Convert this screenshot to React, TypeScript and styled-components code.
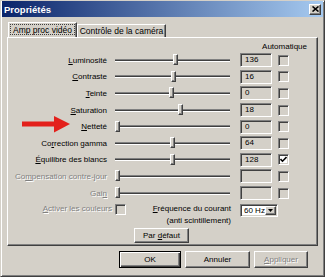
import React from "react";
import styled, { createGlobalStyle, css } from "styled-components";

const GlobalStyle = createGlobalStyle`
  html, body {
    margin: 0;
    padding: 0;
    background: #d4d0c8;
  }
  body {
    font-family: "Liberation Sans", Arial, sans-serif;
    font-size: 8px;
    color: #000;
  }
`;

const raised = css`
  border: 1px solid;
  border-color: #fff #404040 #404040 #fff;
  box-shadow: inset -1px -1px 0 #808080;
`;

const sunken = css`
  border: 1px solid;
  border-color: #808080 #fff #fff #808080;
  box-shadow: inset 1px 1px 0 #404040, inset -1px -1px 0 #d4d0c8;
`;

const disabledText = css`
  color: #808080;
  text-shadow: 1px 1px 0 #fff;
`;

const Window = styled.div`
  box-sizing: border-box;
  width: 325px;
  height: 277px;
  background: #d4d0c8;
  border: 1px solid;
  border-color: #d4d0c8 #404040 #404040 #d4d0c8;
  box-shadow: inset 1px 1px 0 #fff, inset -1px -1px 0 #808080;
  display: flex;
  flex-direction: column;
`;

const TitleBar = styled.div`
  height: 16px;
  margin: 0 1px;
  padding: 0 2px 0 2px;
  display: flex;
  align-items: center;
  justify-content: space-between;
  background: linear-gradient(to right, #0a246a, #a6caf0);
`;

const Title = styled.span`
  color: #fff;
  font-weight: bold;
  font-size: 9.5px;
`;

const CloseButton = styled.div`
  box-sizing: border-box;
  width: 12px;
  height: 11px;
  background: #d4d0c8;
  ${raised};
  display: flex;
  align-items: center;
  justify-content: center;
`;

const Body = styled.div`
  padding: 5px 0 0 6px;
  display: flex;
  flex-direction: column;
`;

const TabRow = styled.div`
  height: 15px;
  padding-left: 1px;
  display: flex;
  align-items: flex-end;
`;

const Tab = styled.div<{ $active?: boolean; $width: number }>`
  box-sizing: border-box;
  width: ${(p) => p.$width}px;
  height: ${(p) => (p.$active ? 15 : 13)}px;
  border-top: 1px solid #fff;
  border-left: 1px solid #fff;
  border-right: 1px solid #404040;
  box-shadow: inset -1px 0 0 #808080;
  display: flex;
  align-items: center;
  justify-content: center;
  white-space: nowrap;
  font-size: 8.5px;
  ${(p) =>
    p.$active &&
    css`
      outline: 1px dotted #404040;
      outline-offset: -3px;
    `}
`;

const Panel = styled.div`
  position: relative;
  box-sizing: border-box;
  width: 311px;
  height: 209px;
  padding-top: 4px;
  ${raised};
  display: flex;
  flex-direction: column;
`;

const AutoHeader = styled.div`
  height: 10px;
  line-height: 10px;
  text-align: right;
  padding-right: 10px;
`;

const Row = styled.div`
  height: 16.6px;
  display: flex;
  align-items: center;
`;

const Label = styled.span<{ $disabled?: boolean; $width?: number }>`
  width: ${(p) => p.$width ?? 99}px;
  text-align: right;
  white-space: nowrap;
  flex-shrink: 0;
  ${(p) => p.$disabled && disabledText};
`;

const Key = styled.span`
  text-decoration: underline;
`;

const Slider = styled.div`
  position: relative;
  width: 120px;
  height: 100%;
  margin: 0 7px 0 6px;
  padding: 0 3px 0 2px;
  box-sizing: border-box;
  display: flex;
  align-items: center;
`;

const Track = styled.div`
  flex: 1;
  height: 1px;
  background: #404040;
  border-top: 1px solid #808080;
  border-bottom: 1px solid #fff;
`;

const Thumb = styled.div`
  position: absolute;
  top: 50%;
  margin-top: -6px;
  box-sizing: border-box;
  width: 5px;
  height: 11px;
  background: #d4d0c8;
  ${raised};
`;

const Edit = styled.div`
  box-sizing: border-box;
  width: 32px;
  height: 14px;
  padding-left: 4px;
  line-height: 12px;
  background: #d4d0c8;
  ${sunken};
`;

const Check = styled.div<{ $checked?: boolean }>`
  box-sizing: border-box;
  width: 11px;
  height: 11px;
  flex-shrink: 0;
  margin-left: 6px;
  background: ${(p) => (p.$checked ? "#fff" : "#d4d0c8")};
  ${sunken};
  display: flex;
  align-items: center;
  justify-content: center;
`;

const FreqRow = styled.div`
  height: 26px;
  display: flex;
  align-items: flex-start;
  padding-top: 2px;
  box-sizing: border-box;
`;

const FreqLabel = styled.div`
  width: 105px;
  margin: 0 9px 0 0;
  text-align: right;
  line-height: 11.5px;
  white-space: nowrap;
`;

const Select = styled.div`
  box-sizing: border-box;
  width: 38px;
  height: 13px;
  margin-top: 1px;
  background: #fff;
  ${sunken};
  display: flex;
  align-items: center;
  justify-content: space-between;
  padding: 0 1px 0 3px;
  line-height: 10px;
`;

const DropButton = styled.div`
  box-sizing: border-box;
  width: 11px;
  height: 9px;
  background: #d4d0c8;
  ${raised};
  display: flex;
  align-items: center;
  justify-content: center;
`;

const Button = styled.div<{ $width: number; $height?: number; $default?: boolean; $disabled?: boolean }>`
  box-sizing: border-box;
  width: ${(p) => p.$width}px;
  height: ${(p) => p.$height ?? 17}px;
  background: #d4d0c8;
  display: flex;
  align-items: center;
  justify-content: center;
  white-space: nowrap;
  ${raised};
  ${(p) =>
    p.$default &&
    css`
      border-color: #000;
      box-shadow: inset 1px 1px 0 #fff, inset -1px -1px 0 #404040,
        inset -2px -2px 0 #808080;
    `}
  ${(p) => p.$disabled && disabledText};
`;

const CenterRow = styled.div`
  display: flex;
  justify-content: center;
  margin-top: 1px;
  padding-right: 2px;
`;

const ButtonBar = styled.div`
  display: flex;
  justify-content: flex-end;
  gap: 4px;
  margin-top: 5px;
  padding-right: 16px;
`;

const Arrow = styled.svg`
  position: absolute;
  left: 14px;
  top: 78px;
`;

const withKey = (text: string, idx: number) => (
  <span>
    {text.slice(0, idx)}
    <Key>{text[idx]}</Key>
    {text.slice(idx + 1)}
  </span>
);

type SliderRow = {
  label: string;
  key: number;
  pos: number;
  value: string;
  checked?: boolean;
  disabled?: boolean;
};

const rows: SliderRow[] = [
  { label: "Luminosité", key: 0, pos: 62, value: "136" },
  { label: "Contraste", key: 0, pos: 60, value: "16" },
  { label: "Teinte", key: 0, pos: 58, value: "0" },
  { label: "Saturation", key: 0, pos: 67, value: "18" },
  { label: "Netteté", key: 0, pos: 4, value: "0" },
  { label: "Correction gamma", key: 2, pos: 59, value: "64" },
  { label: "Équilibre des blancs", key: 0, pos: 59, value: "128", checked: true },
  { label: "Compensation contre-jour", key: 2, pos: 4, value: "", disabled: true },
  { label: "Gain", key: 3, pos: 4, value: "", disabled: true },
];

const CheckMark = () => (
  <svg width="7" height="7" viewBox="0 0 7 7">
    <polyline points="0.5,3 2.5,5.2 6.5,1" fill="none" stroke="#000" strokeWidth="1.6" />
  </svg>
);

const App: React.FC = () => {
  return (
    <Window>
      <GlobalStyle />
      <TitleBar>
        <Title>Propriétés</Title>
        <CloseButton>
          <svg width="7" height="6" viewBox="0 0 7 6">
            <path d="M0.5 0.5 L6.5 5.5 M6.5 0.5 L0.5 5.5" stroke="#000" strokeWidth="1.6" />
          </svg>
        </CloseButton>
      </TitleBar>
      <Body>
        <TabRow>
          <Tab $active $width={69}>
            Amp proc vidéo
          </Tab>
          <Tab $width={89}>Contrôle de la caméra</Tab>
        </TabRow>
        <Panel>
          <AutoHeader>Automatique</AutoHeader>
          {rows.map((r) => (
            <Row key={r.label}>
              <Label $disabled={r.disabled}>{withKey(r.label, r.key)}</Label>
              <Slider>
                <Track />
                <Thumb style={{ left: r.pos - 2 }} />
              </Slider>
              <Edit>{r.value}</Edit>
              <Check $checked={r.checked}>{r.checked && <CheckMark />}</Check>
            </Row>
          ))}
          <FreqRow>
            <Label $disabled $width={104} style={{ marginTop: 1 }}>
              {withKey("Activer les couleurs", 0)}
            </Label>
            <Check style={{ marginLeft: 3, marginTop: 1 }} />
            <FreqLabel>
              {withKey("Fréquence du courant", 0)}
              <br />
              (anti scintillement)
            </FreqLabel>
            <Select>
              <span>60 Hz</span>
              <DropButton>
                <svg width="5" height="3" viewBox="0 0 5 3">
                  <path d="M0 0 H5 L2.5 3 Z" fill="#000" />
                </svg>
              </DropButton>
            </Select>
          </FreqRow>
          <CenterRow>
            <Button $width={55} $height={15}>
              <span>Par {withKey("défaut", 0)}</span>
            </Button>
          </CenterRow>
          <Arrow width="48" height="17" viewBox="0 0 48 17">
            <path d="M0 5.5 H32 V0 L48 8 L32 16.5 V10.5 H0 Z" fill="#e3201b" />
          </Arrow>
        </Panel>
        <ButtonBar>
          <Button $width={62} $default>
            OK
          </Button>
          <Button $width={65}>Annuler</Button>
          <Button $width={54} $disabled>
            {withKey("Appliquer", 0)}
          </Button>
        </ButtonBar>
      </Body>
    </Window>
  );
};

export default App;
